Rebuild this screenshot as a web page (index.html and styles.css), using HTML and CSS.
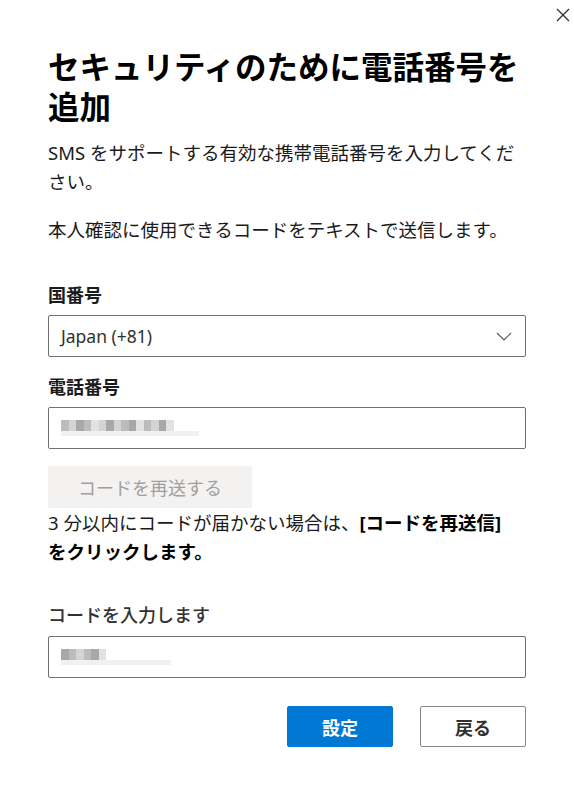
FILE: index.html
```html
<!DOCTYPE html>
<html lang="ja">
<head>
<meta charset="utf-8">
<title>電話番号を追加</title>
<link rel="stylesheet" href="styles.css">
</head>
<body>
<div class="dialog">
  <button class="close" aria-label="閉じる">
    <svg width="14" height="14" viewBox="0 0 14 14"><path d="M1 1L13 13M13 1L1 13" stroke="#323130" stroke-width="1.3" fill="none"/></svg>
  </button>
  <h1 class="title">セキュリティのために電話番号を追加</h1>
  <p class="desc first">SMS をサポートする有効な携帯電話番号を入力してください。</p>
  <p class="desc">本人確認に使用できるコードをテキストで送信します。</p>

  <div class="label top">国番号</div>
  <div class="field select">
    <span class="value">Japan (+81)</span>
    <svg class="chev" width="16" height="9" viewBox="0 0 16 9"><path d="M1 1L8 8L15 1" stroke="#605e5c" stroke-width="1.2" fill="none"/></svg>
  </div>

  <div class="label">電話番号</div>
  <div class="field input">
    <div class="mosaic">
      <div class="mrow dark">
        <i class="m3"></i><i class="m2"></i><i class="m4"></i><i class="m3"></i><i class="m5"></i><i class="m2"></i><i class="m4"></i><i class="m2"></i><i class="m3"></i><i class="m4"></i><i class="m5"></i><i class="m3"></i><i class="m2"></i><i class="m4"></i><i class="m5"></i>
      </div>
      <div class="mrow light w1"></div>
    </div>
  </div>

  <button class="resend" disabled>コードを再送する</button>
  <p class="hint">3 分以内にコードが届かない場合は、<b>[コードを再送信]<span class="nowrap">をクリックします。</span></b></p>

  <div class="label code">コードを入力します</div>
  <div class="field input code-input">
    <div class="mosaic">
      <div class="mrow dark">
        <i class="m4"></i><i class="m3"></i><i class="m2"></i><i class="m3"></i><i class="m4"></i><i class="m5"></i>
      </div>
      <div class="mrow light w2"></div>
    </div>
  </div>

  <div class="actions">
    <button class="btn primary">設定</button>
    <button class="btn secondary">戻る</button>
  </div>
</div>
</body>
</html>
```
FILE: styles.css
```css
* { box-sizing: border-box; }
html, body { margin: 0; padding: 0; background: #fff; }
body {
  font-family: "Segoe UI", "Noto Sans", "Noto Sans CJK JP", sans-serif;
  color: #1b1b1b;
  width: 574px;
  height: 798px;
  overflow: hidden;
}
.dialog {
  position: relative;
  padding: 45px 48px 0 48px;
}
.close {
  position: absolute;
  top: 8px;
  right: 4px;
  width: 14px;
  height: 14px;
  padding: 0;
  border: 0;
  background: none;
  display: block;
}
.close svg { display: block; }
.title {
  margin: 0;
  font-family: "Noto Sans CJK JP", sans-serif;
  font-size: 31.5px;
  line-height: 40px;
  font-weight: 700;
  color: #000;
}
.desc {
  margin: 19px 0 0 0;
  font-size: 18.5px;
  line-height: 29px;
  font-family: "Noto Sans", "Noto Sans CJK JP", sans-serif;
}
.desc.first { margin-top: 13px; }
.label {
  margin-top: 15px;
  font-size: 18px;
  line-height: 29px;
  font-weight: 700;
  color: #1b1b1b;
  font-family: "Noto Sans CJK JP", sans-serif;
}
.label.top { margin-top: 36px; }
.label.code { margin-top: 34px; font-weight: 500; color: #323130; }
.field {
  margin-top: 6px;
  height: 42px;
  border: 1px solid #707070;
  border-radius: 2px;
  display: flex;
  align-items: center;
  padding: 0 13px 0 12px;
}
.select { justify-content: space-between; }
.value {
  font-family: "Noto Sans", sans-serif;
  font-size: 17.5px;
  color: #323130;
}
.chev { display: block; }
.code-input { margin-top: 7px; }
.mosaic {
  display: flex;
  flex-direction: column;
  filter: blur(0.6px);
}
.mrow { display: flex; }
.mrow.dark { height: 11px; }
.mrow.dark i { display: block; width: 7.5px; height: 11px; }
.m2 { background: #d4d4d4; }
.m3 { background: #bcbcbc; }
.m4 { background: #a8a8a8; }
.m5 { background: #e2e2e2; }
.mrow.light { height: 5px; background: #f1f1f1; }
.w1 { width: 138px; }
.w2 { width: 110px; }
.resend {
  margin-top: 17px;
  width: 204px;
  height: 42px;
  border: 0;
  border-radius: 2px;
  background: #f3f2f1;
  color: #a19f9d;
  font-family: "Noto Sans CJK JP", sans-serif;
  font-size: 18px;
  padding: 0;
  display: block;
}
.hint {
  margin: 0;
  font-size: 18.5px;
  line-height: 29px;
  font-family: "Noto Sans", "Noto Sans CJK JP", sans-serif;
}
.hint b { font-weight: 700; color: #000; }
.nowrap { white-space: nowrap; }
.actions {
  margin-top: 28px;
  display: flex;
  justify-content: flex-end;
  gap: 27px;
}
.btn {
  width: 106px;
  height: 41px;
  border-radius: 2px;
  font-family: "Noto Sans CJK JP", sans-serif;
  font-size: 18px;
  font-weight: 700;
  padding: 0;
}
.primary {
  background: #0078d4;
  border: 1px solid #0078d4;
  color: #fff;
}
.secondary {
  background: #fff;
  border: 1px solid #8a8886;
  color: #323130;
}
```
